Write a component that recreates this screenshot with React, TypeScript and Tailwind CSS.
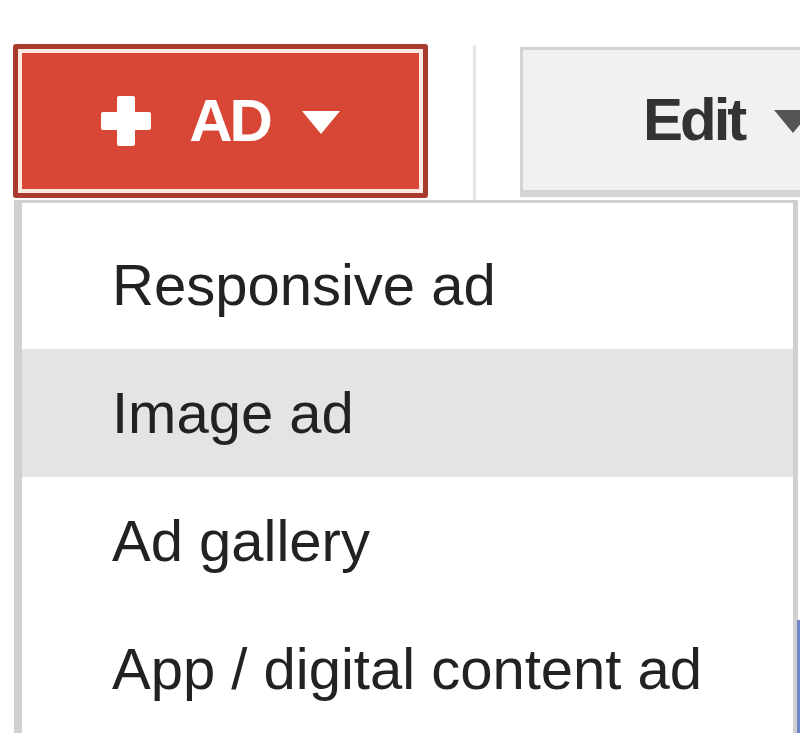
import React from "react";

const items = ["Responsive ad", "Image ad", "Ad gallery", "App / digital content ad"];

export default function App() {
  return (
    <div className="relative w-[800px] h-[733px] overflow-hidden bg-white font-['Liberation_Sans',Arial,sans-serif]">
      <div className="flex items-start pt-[44px] pl-[13px]">
        <div className="w-[415px] h-[154px] shrink-0 rounded-[3px] border-[5px] border-[#a83a2e] bg-[#fbe9e2] p-[4px]">
          <div className="h-full bg-[#d84735] flex items-center justify-center">
            <svg width="50" height="50" viewBox="0 0 50 50" className="shrink-0">
              <rect x="16" y="0" width="18" height="50" rx="2" fill="#fff" />
              <rect x="0" y="16" width="50" height="18" rx="2" fill="#fff" />
            </svg>
            <span className="ml-[38px] text-[60px] leading-none font-bold tracking-[-3px] text-white">AD</span>
            <svg width="38" height="24" viewBox="0 0 38 24" className="ml-[32px] shrink-0 mt-[4px]">
              <polygon points="0,0 38,0 19,23" fill="#fff" />
            </svg>
          </div>
        </div>
        <div className="ml-[45px] mt-[1px] w-[3px] h-[156px] shrink-0 bg-[#e6e6e6]" />
        <div className="ml-[44px] mt-[3px] w-[320px] h-[150px] shrink-0 bg-[#f1f1f1] border-t-[3px] border-l-[3px] border-b-[7px] border-[#d4d4d4] flex items-center pl-[120px]">
          <span className="text-[60px] leading-none font-bold tracking-[-3px] text-[#333]">Edit</span>
          <svg width="38" height="24" viewBox="0 0 38 24" className="ml-[30px] shrink-0 mt-[4px]">
            <polygon points="0,0 38,0 19,23" fill="#555" />
          </svg>
        </div>
      </div>
      <div className="absolute left-[14px] top-[200px] w-[784px] h-[533px] bg-white border-t-[3px] border-l-[8px] border-r-[5px] border-[#d0d0d0] pt-[18px]">
        {items.map((t, i) => (
          <div
            key={t}
            className={`h-[128px] flex items-center pl-[90px] text-[58px] leading-none text-[#222] ${i === 1 ? "bg-[#e4e4e4]" : ""}`}
          >
            {t}
          </div>
        ))}
      </div>
      <div className="absolute right-0 top-[620px] w-[3px] h-[113px] bg-[#6f86c9]" />
    </div>
  );
}
